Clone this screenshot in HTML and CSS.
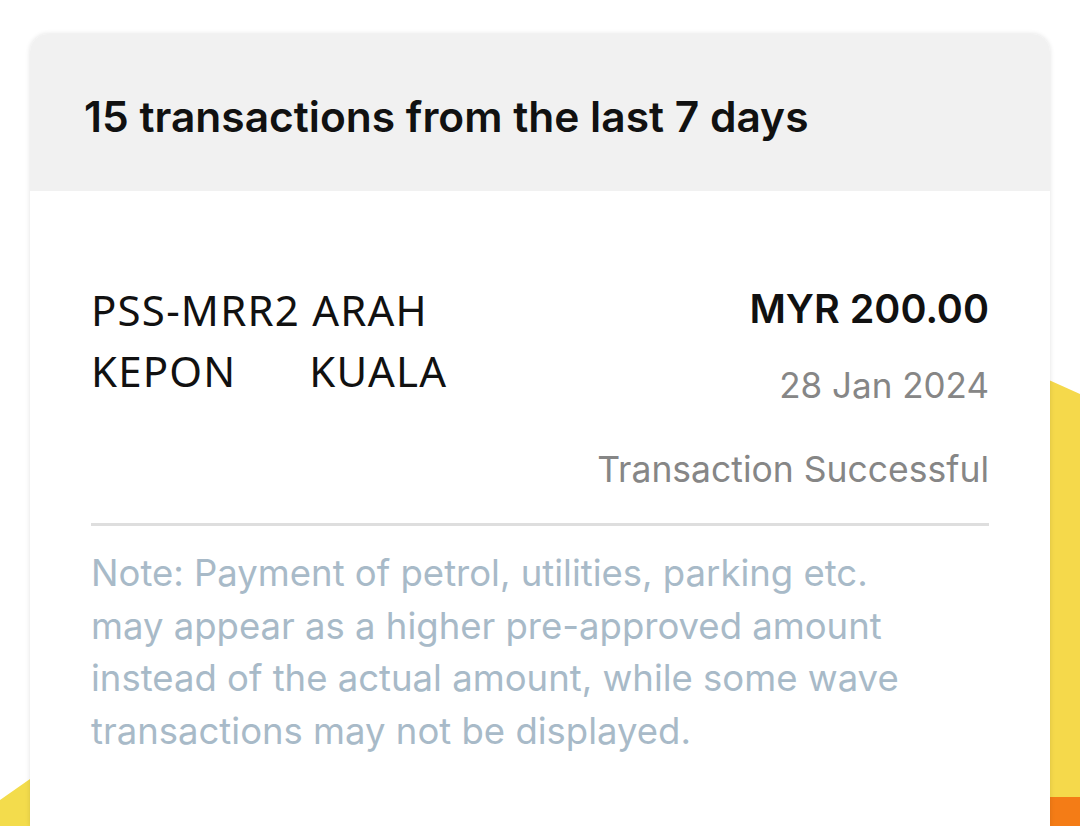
FILE: index.html
```html
<!DOCTYPE html>
<html lang="en">
<head>
    <meta charset="UTF-8">
    <meta name="viewport" content="width=device-width, initial-scale=1.0">
    <title>Transactions</title>
    <link rel="stylesheet" href="styles.css">
</head>
<body>

    <!-- decorative background shapes behind the card -->
    <div class="blob blob-right"></div>
    <div class="blob blob-orange"></div>
    <div class="blob blob-left"></div>

    <div class="page">
        <div class="card">
            <div class="card-header">
                <h1>15 transactions from the last 7 days</h1>
            </div>

            <div class="txn">
                <div class="txn-row">
                    <div class="merchant">PSS-MRR2 ARAH<br>KEPON      KUALA</div>
                    <div class="txn-info">
                        <div class="amount">MYR 200.00</div>
                        <div class="date">28 Jan 2024</div>
                        <div class="status">Transaction Successful</div>
                    </div>
                </div>

                <p class="note">Note: Payment of petrol, utilities, parking etc. may appear as a higher pre-approved amount instead of the actual amount, while some wave transactions may not be displayed.</p>
            </div>
        </div>
    </div>

</body>
</html>
```

FILE: styles.css
```css
body {
    font-family: Inter, Lato, sans-serif;
    background-color: #ffffff;
    margin: 0;
    height: 826px;
    overflow: hidden;
    position: relative;
}
.blob {
    position: absolute;
    z-index: 0;
}
.blob-right {
    left: 1040px;
    top: 370px;
    width: 40px;
    height: 456px;
    background-color: #f5d94b;
    clip-path: polygon(0 6px, 100% 24px, 100% 100%, 0 100%);
}
.blob-orange {
    left: 1040px;
    top: 797px;
    width: 40px;
    height: 29px;
    background-color: #f47c16;
}
.blob-left {
    left: 0;
    top: 760px;
    width: 40px;
    height: 66px;
    background-color: #f3dc4c;
    clip-path: polygon(0 40px, 100% 12px, 100% 100%, 0 100%);
}
.page {
    position: relative;
    z-index: 1;
    padding: 34px 30px 0;
}
.card {
    background-color: #ffffff;
    border-radius: 18px 18px 0 0;
    box-shadow: 0 0 5px rgba(0, 0, 0, 0.12);
    overflow: hidden;
    height: 792px;
}
.card-header {
    background-color: #f1f1f1;
    height: 157px;
    padding: 8px 54px 0;
    box-sizing: border-box;
    display: flex;
    align-items: center;
}
.card-header h1 {
    margin: 0;
    font-size: 42.5px;
    font-weight: 600;
    color: #111111;
}
.txn {
    padding: 88px 61px 0;
}
.txn-row {
    display: flex;
    justify-content: space-between;
    padding-bottom: 32px;
    border-bottom: 3px solid #dedede;
}
.merchant {
    font-family: "Noto Sans", sans-serif;
    font-size: 42px;
    line-height: 61px;
    letter-spacing: 1.2px;
    color: #111111;
    white-space: pre;
}
.txn-info {
    text-align: right;
}
.amount {
    font-size: 39.5px;
    font-weight: 600;
    line-height: 61px;
    color: #111111;
}
.date {
    font-size: 35px;
    color: #868686;
    margin-top: 24px;
}
.status {
    font-size: 35.5px;
    color: #868686;
    margin-top: 42px;
}
.note {
    margin: 21px 0 0;
    max-width: 840px;
    font-size: 36.5px;
    line-height: 52.5px;
    color: #a8bac8;
}
```
